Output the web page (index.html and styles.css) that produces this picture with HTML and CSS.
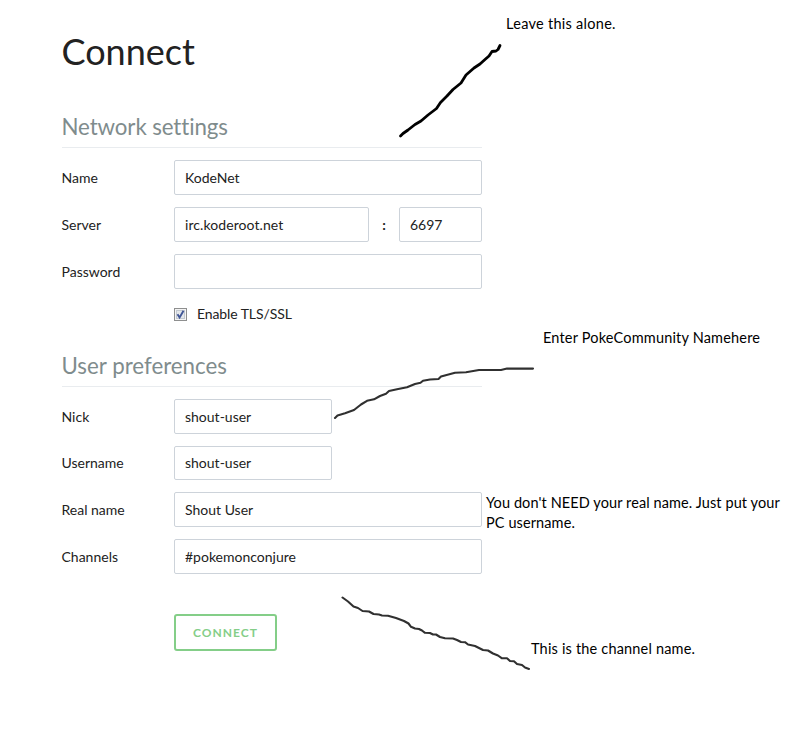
FILE: index.html
```html
<!DOCTYPE html>
<html lang="en">
<head>
<meta charset="utf-8">
<title>Connect</title>
<link rel="stylesheet" href="styles.css">
</head>
<body>
<form class="connect">
  <h1>Connect</h1>
  <h2 class="network">Network settings</h2>
  <div class="fields">
    <div class="row"><label for="name">Name</label><input id="name" value="KodeNet"></div>
    <div class="row"><label for="server">Server</label><input id="server" value="irc.koderoot.net"><span class="colon">:</span><input class="port" aria-label="Port" value="6697"></div>
    <div class="row"><label for="password">Password</label><input id="password" type="password"></div>
  </div>
  <div class="tls">
    <svg class="check" width="13" height="13" viewBox="0 0 13 13"><rect x=".5" y=".5" width="12" height="12" fill="#f4f4f4" stroke="#8e8f8f"/><rect x="2.5" y="2.5" width="8" height="8" fill="#e4e7ea" stroke="#c3c9d0"/><path d="M3.5 6.2 5.6 9.5 9.5 2.8" fill="none" stroke="#405696" stroke-width="1.9"/></svg>
    <span>Enable TLS/SSL</span>
  </div>
  <h2>User preferences</h2>
  <div class="fields">
    <div class="row"><label for="nick">Nick</label><input id="nick" class="half" value="shout-user"></div>
    <div class="row short"><label for="username">Username</label><input id="username" class="half" value="shout-user"></div>
    <div class="row"><label for="real">Real name</label><input id="real" value="Shout User"></div>
    <div class="row"><label for="channels">Channels</label><input id="channels" value="#pokemonconjure"></div>
  </div>
  <button type="button">CONNECT</button>
</form>
<svg class="strokes" width="800" height="740" viewBox="0 0 800 740">
  <polyline class="thick" points="400.5,136 403,133.5 408,130 415,124.5 421,121 428,115 436.500,108.500 440.500,102.500 447,96 453,89.500 461,83 466,75 474,68 480,64 485,59.500 489,56 492,51.500 496,51 498,49.500 500,45.500"/>
  <polyline class="thin" points="335,418 337.500,415.500 345,413.300 354,410 361,404.500 367,400.800 374,399.300 380,396 386,393.700 389,391 397,389.300 407,387.300 415,384 420.500,382.800 423,380.800 430,379.500 438.500,379 441,376.500 455,372.700 466,372.300 479,370 501,370 507,368.600 533,368.600"/>
  <polyline class="thin" points="342.500,597.500 348,601.500 353.500,606.500 358,608 362.500,611 369,611.500 373.500,614 379,614.500 382,615.500 388,615.700 396,618 404,621 408.500,623.500 411,626.800 415,628.500 419,629 422,630.500 425,632.800 430,633 433,634.500 436,634.500 440,637 445,638.200 453,638.500 457,640 461,642 465,642.200 468,644.500 475,646 483,650 488,650.500 493,653.500 498,655.500 502,658.300 507,658.300 510,661 514,661.300 517,664 522,665 525,667.500 529,669"/>
</svg>
<p class="note leave">Leave this alone.</p>
<p class="note enter">Enter PokeCommunity Namehere</p>
<p class="note real">You don't NEED your real name. Just put your<br>PC username.</p>
<p class="note channel">This is the channel name.</p>
</body>
</html>
```
FILE: styles.css
```css
* { box-sizing: border-box; }
body { margin: 0; width: 800px; height: 740px; overflow: hidden; background: #fff; color: #222; font: 14px/20px Lato, sans-serif; font-variant-ligatures: none; }
.connect { width: 420px; margin-left: 62px; padding-top: 30px; }
h1 { margin: 0; height: 44px; font-size: 36px; font-weight: 400; line-height: 42px; text-indent: -0.5px; }
h2 { margin: 38px 0 12px; height: 36px; border-bottom: 1px solid #e9ecef; color: #7f8c8d; font-size: 22.3px; font-weight: 400; line-height: 29px; text-indent: -0.5px; }
.network { letter-spacing: -0.1px; }
.fields { display: flex; flex-direction: column; gap: 12px; }
.row { display: flex; height: 35px; align-items: center; }
.short { height: 34px; }
label { width: 112px; flex: none; text-indent: -0.5px; }
input { min-width: 0; flex: 1; height: 100%; padding: 0 10px; border: 1px solid #cdd3da; border-radius: 2px; outline: 0; background: #fff; color: #222; font: inherit; }
.half { flex: none; width: 158px; }
.short input { padding-bottom: 1px; }
#server { letter-spacing: 0.08px; }
.colon { width: 30px; text-align: center; font-weight: 700; }
.port { flex: none; width: 83px; }
.tls { display: flex; align-items: center; gap: 10px; height: 20px; margin: 15px 0 0 112px; letter-spacing: -0.1px; }
.tls + h2 { margin-top: 27px; }
button { display: block; width: 103px; height: 37px; margin: 40px 0 0 112px; padding: 0; border: 2px solid #84ce88; border-radius: 3px; background: #fff; color: #84ce88; font: 700 12px Lato, sans-serif; letter-spacing: 1px; }
.strokes { position: absolute; top: 0; left: 0; pointer-events: none; }
polyline { fill: none; stroke-linecap: round; stroke-linejoin: round; }
.thick { stroke: #000; stroke-width: 2.8; }
.thin { stroke: #303030; stroke-width: 2.1; }
.note { position: absolute; margin: 0; color: #000; font-size: 14.5px; line-height: 20px; letter-spacing: 0.18px; white-space: nowrap; }
.leave { left: 506px; top: 14px; letter-spacing: 0.28px; }
.enter { left: 543px; top: 328px; }
.note.real { left: 486px; top: 493px; letter-spacing: 0.1px; }
.channel { left: 531px; top: 639px; }
```
